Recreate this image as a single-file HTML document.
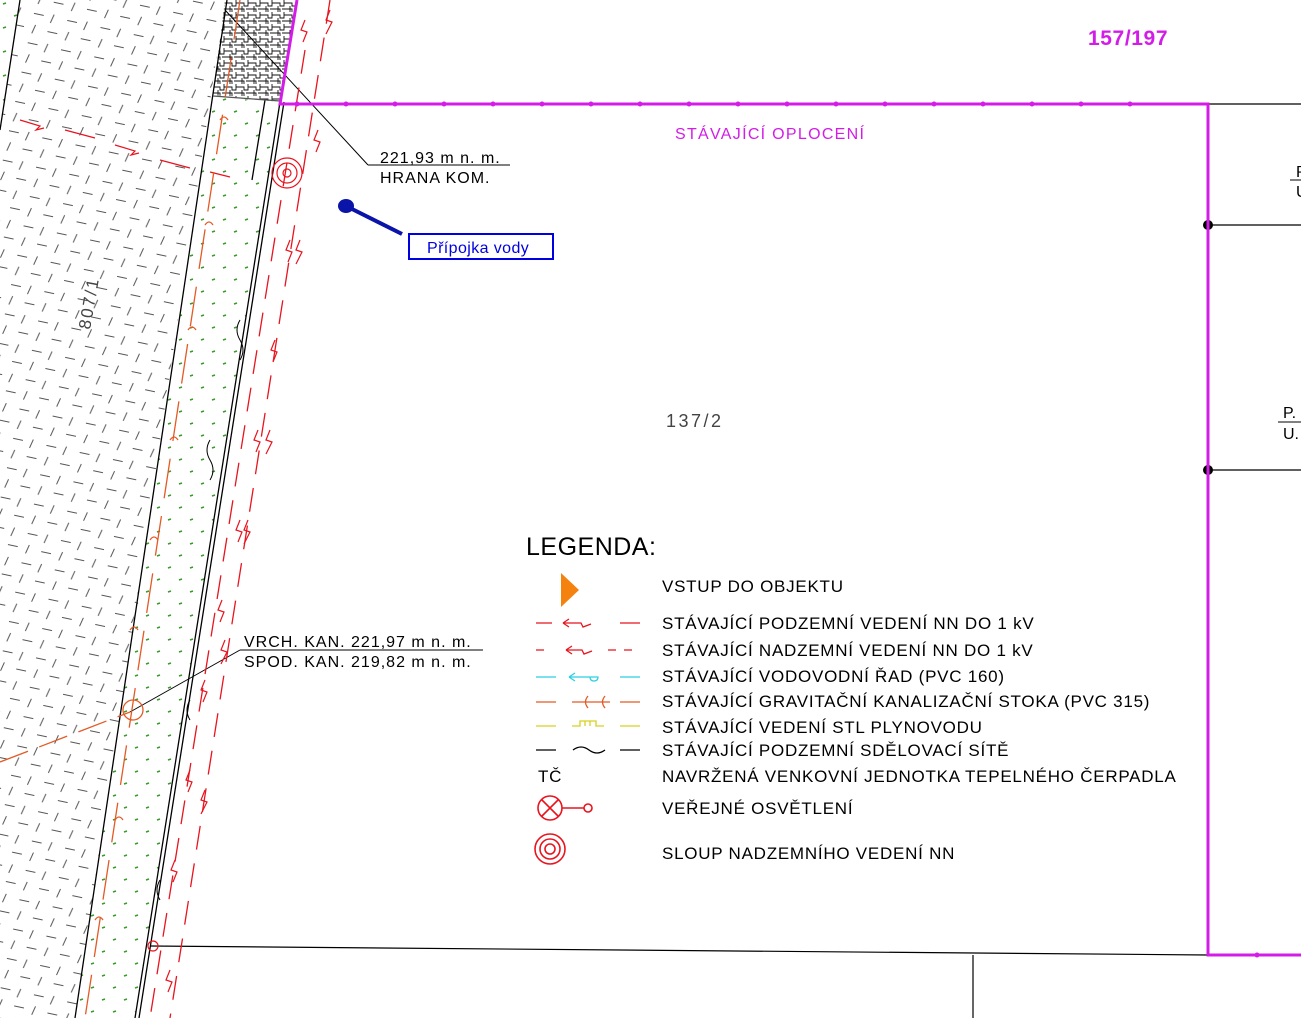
<!DOCTYPE html>
<html><head><meta charset="utf-8"><style>
html,body{margin:0;padding:0;background:#fff;}
svg{display:block}
text{font-family:"Liberation Sans",sans-serif;}
</style></head><body>
<svg width="1301" height="1018" viewBox="0 0 1301 1018" xmlns="http://www.w3.org/2000/svg">
<defs>
<pattern id="pav" width="34" height="30" patternUnits="userSpaceOnUse" patternTransform="rotate(12)">
<path d="M2 6h10M22 3l-2 9M19 21h10M6 17l-2 9" stroke="#555" stroke-width="1" fill="none"/>
</pattern>
<pattern id="cob" width="12" height="12" patternUnits="userSpaceOnUse">
<path d="M0 3h4v3h4v-3h4M2 6v6M8 0v3M0 9h4v3M6 9h6" stroke="#111" stroke-width="0.9" fill="none"/>
</pattern>
<pattern id="grn" width="22" height="24" patternUnits="userSpaceOnUse">
<path d="M3 4l3 -1M14 16l3 -1" stroke="#3a9a2a" stroke-width="1.6"/>
</pattern>
</defs>
<rect width="1301" height="1018" fill="#fff"/>
<polygon points="0,130 20,0 225,0 75,1018 0,1018" fill="url(#pav)"/>
<polygon points="225,0 297,0 280,102 213,95" fill="url(#cob)"/>
<polygon points="213,95 280,104 135,1018 75,1018" fill="url(#grn)"/>
<polygon points="0,0 20,0 0,130" fill="url(#grn)"/>
<g stroke="#000" stroke-width="1.3" fill="none">
<line x1="20" y1="0" x2="0" y2="130"/>
<line x1="227" y1="0" x2="75" y2="1018"/>
<line x1="280" y1="102" x2="135" y2="1018"/>
<line x1="284" y1="102" x2="139" y2="1018"/>
<line x1="265" y1="100" x2="252" y2="180"/>
<line x1="213" y1="96" x2="280" y2="101" stroke="#555"/>
<line x1="225" y1="10" x2="368" y2="165" stroke-width="1"/>
<line x1="368" y1="165" x2="510" y2="165" stroke-width="1"/>
<line x1="130" y1="712" x2="240" y2="650" stroke-width="1"/>
<line x1="240" y1="650" x2="483" y2="650" stroke-width="1"/>
<line x1="150" y1="946" x2="1208" y2="955" stroke-width="1.2"/>
<line x1="973" y1="955" x2="973" y2="1018" stroke-width="1.2"/>
<line x1="1208" y1="104" x2="1301" y2="104"/>
<line x1="1208" y1="225" x2="1301" y2="225"/>
<line x1="1208" y1="470" x2="1301" y2="470"/>
<line x1="1290" y1="180" x2="1301" y2="180" stroke-width="1"/>
<line x1="1278" y1="422" x2="1301" y2="422" stroke-width="1"/>
<path d="M240 320q-6 10 0 20t0 20M210 440q-6 10 0 20t0 20M190 700q-6 10 0 20M160 880q-6 10 0 20" stroke-width="1"/>
</g>
<circle cx="1208" cy="225" r="5" fill="#000"/>
<circle cx="1208" cy="470" r="5" fill="#000"/>
<g stroke="#e8141e" stroke-width="1.3" fill="none" stroke-dasharray="24,14">
<line x1="330" y1="0" x2="170" y2="1018"/>
<line x1="305" y1="50" x2="150" y2="1018"/>
</g>
<g stroke="#e8141e" stroke-width="1.2" fill="none">
<path d="M305 20l-4 10 6 2-4 10M318 130l-4 10 6 2-4 10M290 240l-4 10 6 2-4 10M275 340l-4 10 6 2-4 10M258 430l-4 10 6 2-4 10M240 520l-4 10 6 2-4 10M222 600l-4 10 6 2-4 10M205 680l-4 10 6 2-4 10M190 770l-4 10 6 2-4 10M175 860l-4 10 6 2-4 10M170 970l-4 10 6 2-4 10"/>
<path d="M330 10l-4 10 6 2-6 12M300 240l-4 10 6 2-6 12M270 430l-4 10 6 2-6 12M248 520l-4 10 6 2-6 12M225 640l-4 10 6 2-6 12M205 790l-4 10 6 2-6 12"/>
<path d="M20 120l20 6-4 4 8 -2M65 130l30 8M115 145l20 6-4 4 8 -2M160 160l30 8M210 172l20 5"/>
<circle cx="287" cy="173" r="15"/><circle cx="287" cy="173" r="10"/><circle cx="287" cy="173" r="4"/>
<circle cx="153" cy="946" r="5"/>
</g>
<g stroke="#e35a25" stroke-width="1.3" fill="none">
<line x1="240" y1="0" x2="85" y2="1018" stroke-dasharray="40,18"/>
<line x1="0" y1="762" x2="130" y2="712" stroke-dasharray="30,12"/>
<circle cx="133" cy="710" r="10"/>
<path d="M220 120q4-6 8 0M205 225q4-6 8 0M188 330q4-6 8 0M170 440q4-6 8 0M150 540q4-6 8 0M130 630q4-6 8 0M115 820q4-6 8 0M95 920q4-6 8 0"/>
</g>
<g stroke="#d41ce8" stroke-width="3" fill="none">
<polyline points="297,0 280,104 1208,104 1208,955 1301,955"/>
</g>
<g fill="#d41ce8">
<circle cx="297" cy="104" r="2.5"/><circle cx="346" cy="104" r="2.5"/><circle cx="395" cy="104" r="2.5"/><circle cx="444" cy="104" r="2.5"/><circle cx="493" cy="104" r="2.5"/><circle cx="542" cy="104" r="2.5"/><circle cx="591" cy="104" r="2.5"/><circle cx="640" cy="104" r="2.5"/><circle cx="689" cy="104" r="2.5"/><circle cx="738" cy="104" r="2.5"/><circle cx="787" cy="104" r="2.5"/><circle cx="836" cy="104" r="2.5"/><circle cx="885" cy="104" r="2.5"/><circle cx="934" cy="104" r="2.5"/><circle cx="983" cy="104" r="2.5"/><circle cx="1032" cy="104" r="2.5"/><circle cx="1081" cy="104" r="2.5"/><circle cx="1130" cy="104" r="2.5"/><circle cx="1257" cy="955" r="2.5"/>
</g>
<text x="1088" y="45" font-size="21" font-weight="bold" fill="#d41ce8" letter-spacing="0.6">157/197</text>
<text x="675" y="139" font-size="16" fill="#d41ce8" letter-spacing="1.3">STÁVAJÍCÍ OPLOCENÍ</text>
<g letter-spacing="1">
<text x="380" y="163" font-size="16">221,93 m n. m.</text>
<text x="380" y="183" font-size="16">HRANA KOM.</text>
</g>
<line x1="346" y1="206" x2="402" y2="234" stroke="#0a14a8" stroke-width="4"/>
<ellipse cx="346" cy="206" rx="8" ry="7" fill="#0a14a8"/>
<rect x="409" y="234" width="144" height="25" fill="#fff" stroke="#0000e0" stroke-width="2"/>
<text x="427" y="253" font-size="16" fill="#0000e0" letter-spacing="0.4">Přípojka vody</text>
<text x="0" y="0" font-size="17" fill="#444" letter-spacing="2" transform="translate(90,330) rotate(-80)">807/1</text>
<text x="666" y="427" font-size="18" fill="#444" letter-spacing="2.5">137/2</text>
<text x="1296" y="177" font-size="16">P</text>
<text x="1296" y="197" font-size="16">U</text>
<text x="1283" y="418" font-size="16">P.</text>
<text x="1283" y="439" font-size="16">U.</text>
<g letter-spacing="1">
<text x="244" y="647" font-size="16">VRCH. KAN. 221,97 m n. m.</text>
<text x="244" y="667" font-size="16">SPOD. KAN. 219,82 m n. m.</text>
</g>
<text x="526" y="555" font-size="25" letter-spacing="0.5">LEGENDA:</text>
<polygon points="561,573 579,590 561,607" fill="#f5820f"/>
<g font-size="17" letter-spacing="0.75">
<text x="662" y="592">VSTUP DO OBJEKTU</text>
<text x="662" y="629">STÁVAJÍCÍ PODZEMNÍ VEDENÍ NN DO 1 kV</text>
<text x="662" y="656">STÁVAJÍCÍ NADZEMNÍ VEDENÍ NN DO 1 kV</text>
<text x="662" y="682">STÁVAJÍCÍ VODOVODNÍ ŘAD (PVC 160)</text>
<text x="662" y="707">STÁVAJÍCÍ GRAVITAČNÍ KANALIZAČNÍ STOKA (PVC 315)</text>
<text x="662" y="733">STÁVAJÍCÍ VEDENÍ STL PLYNOVODU</text>
<text x="662" y="756">STÁVAJÍCÍ PODZEMNÍ SDĚLOVACÍ SÍTĚ</text>
<text x="538" y="782">TČ</text>
<text x="662" y="782">NAVRŽENÁ VENKOVNÍ JEDNOTKA TEPELNÉHO ČERPADLA</text>
<text x="662" y="814">VEŘEJNÉ OSVĚTLENÍ</text>
<text x="662" y="859">SLOUP NADZEMNÍHO VEDENÍ NN</text>
</g>
<g fill="none" stroke-width="1.3">
<path d="M536 623h16M620 623h20M563 623l6-4M563 623l6 4M563 623h18l2 4 8-3" stroke="#e8141e"/>
<path d="M536 650h8M566 650l6-4M566 650l6 4M566 650h16l2 4 8-3M608 650h8M624 650h8" stroke="#e8141e"/>
<path d="M536 677h20M620 677h20M569 677l6-4M569 677l6 4M569 677h29q0 4-4 4t-4-4" stroke="#2ad0e0"/>
<path d="M536 702h20M620 702h20M572 702h38M588 696q-5 6 0 12M605 696q-5 6 0 12" stroke="#e35a25"/>
<path d="M536 726h20M620 726h20M572 726h8v-5h16v5h8M585 721v5M590 721v5" stroke="#d8d020"/>
<path d="M536 750h20M620 750h20M573 750q8-6 16 0t16 0" stroke="#000"/>
<g stroke="#e8141e" stroke-width="1.6"><circle cx="550" cy="808" r="12"/><path d="M542 800l16 16M558 800l-16 16M562 808h22"/><circle cx="588" cy="808" r="4"/>
<circle cx="550" cy="849" r="15"/><circle cx="550" cy="849" r="10"/><circle cx="550" cy="849" r="5"/></g>
</g>
</svg>
</body></html>
